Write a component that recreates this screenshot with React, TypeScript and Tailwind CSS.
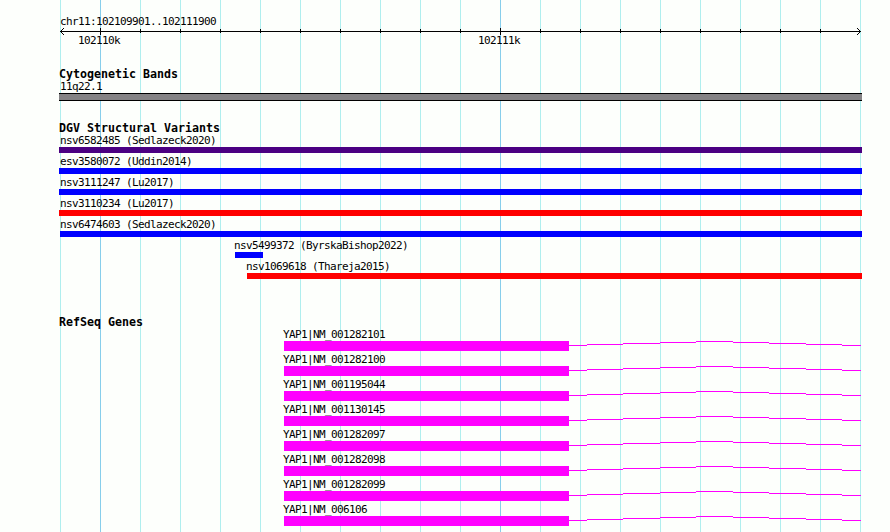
const VARIANTS = [
  { name: 'nsv6582485 (Sedlazeck2020)', label: 'ml-[60px]', bar: 'ml-[59px] w-[803px] bg-[#4b0082]' },
  { name: 'esv3580072 (Uddin2014)', label: 'ml-[60px]', bar: 'ml-[59px] w-[803px] bg-[#0000ff]' },
  { name: 'nsv3111247 (Lu2017)', label: 'ml-[60px]', bar: 'ml-[59px] w-[803px] bg-[#0000ff]' },
  { name: 'nsv3110234 (Lu2017)', label: 'ml-[60px]', bar: 'ml-[59px] w-[803px] bg-[#ff0000]' },
  { name: 'nsv6474603 (Sedlazeck2020)', label: 'ml-[60px]', bar: 'ml-[60px] w-[802px] bg-[#0000ff]' },
  { name: 'nsv5499372 (ByrskaBishop2022)', label: 'ml-[234px]', bar: 'ml-[235px] w-[28px] bg-[#0000ff]' },
  { name: 'nsv1069618 (Thareja2015)', label: 'ml-[246px]', bar: 'ml-[247px] w-[615px] bg-[#ff0000]' },
];

const GENES = [
  'YAP1|NM_001282101',
  'YAP1|NM_001282100',
  'YAP1|NM_001195044',
  'YAP1|NM_001130145',
  'YAP1|NM_001282097',
  'YAP1|NM_001282098',
  'YAP1|NM_001282099',
  'YAP1|NM_006106',
];

// One grid line every 100 bases, the darker ones mark 1 kb
const LINES = Array.from({ length: 21 }, (_, i) => ({ x: i * 40, major: i === 1 || i === 11 }));

function Label({ text, className = '' }: { text: string; className?: string }) {
  return (
    <div className={`h-[15px] text-[11px] leading-[17px] tracking-[-0.622px] whitespace-pre ${className}`}>
      {text}
    </div>
  );
}

function Heading({ text }: { text: string }) {
  return (
    <h2 className="ml-[59px] h-3 text-[11.63px] leading-[17px] font-bold whitespace-pre">{text}</h2>
  );
}

function GridLines() {
  return (
    <div className="absolute inset-y-0 left-[60px] flex gap-[39px]">
      {LINES.map((line) => (
        <div key={line.x} className={`h-full w-px ${line.major ? 'bg-[#87ceeb]' : 'bg-[#afeeee]'}`} />
      ))}
    </div>
  );
}

function Ruler() {
  return (
    <svg className="ml-[60px] block" width="802" height="7" viewBox="0 0 802 7" shapeRendering="crispEdges">
      <rect x="0" y="3" width="801" height="1" />
      {LINES.slice(1, -1).map((line) => (
        <rect key={line.x} x={line.x} y={line.major ? 0 : 1} width="1" height={line.major ? 7 : 4} />
      ))}
      <path d="M1 2h1v1h-1zM2 1h1v1h-1zM3 0h1v1h-1zM1 4h1v1h-1zM2 5h1v1h-1zM3 6h1v1h-1z" />
      <path d="M799 2h1v1h-1zM798 1h1v1h-1zM797 0h1v1h-1zM799 4h1v1h-1zM798 5h1v1h-1zM797 6h1v1h-1z" />
    </svg>
  );
}

function Intron() {
  return (
    <svg width="292" height="10" viewBox="0 0 292 10" shapeRendering="crispEdges" fill="#ff00ff">
      <path d="M0 4h18v1H0zM18 3h36v1H18zM54 2h37v1H54zM91 1h36v1H91zM127 0h37v1H127zM164 1h36v1H164zM200 2h37v1H200zM237 3h36v1H237zM273 4h19v1H273z" />
    </svg>
  );
}

export default function App() {
  return (
    <div className="relative h-[532px] w-[890px] overflow-hidden bg-[#fdfffc] font-['DejaVu_Sans_Mono',monospace] text-black">
      <GridLines />
      <div className="relative">
        {/* Position */}
        <Label text="chr11:102109901..102111900" className="mt-[13px] ml-[60px]" />
        <Ruler />
        <div className="-mt-[3px] flex">
          <Label text="102110k" className="ml-[78px] w-[400px]" />
          <Label text="102111k" />
        </div>

        <section className="mt-[19px]">
          <Heading text="Cytogenetic Bands" />
          <Label text="11q22.1" className="ml-[60px]" />
          <div className="ml-[59px] h-2 w-[803px] border-y border-black bg-[#848284]" />
        </section>

        <section className="mt-[19px]">
          <Heading text="DGV Structural Variants" />
          {VARIANTS.map((v) => (
            <div key={v.name}>
              <Label text={v.name} className={v.label} />
              <div className={`h-1.5 ${v.bar}`} />
            </div>
          ))}
        </section>

        <section className="mt-[35px]">
          <Heading text="RefSeq Genes" />
          {GENES.map((gene) => (
            <div key={gene}>
              <Label text={gene} className="ml-[283px]" />
              <div className="flex h-2.5">
                <div className="ml-[284px] w-[285px] bg-[#ff00ff]" />
                <Intron />
              </div>
            </div>
          ))}
        </section>
      </div>
    </div>
  );
}
